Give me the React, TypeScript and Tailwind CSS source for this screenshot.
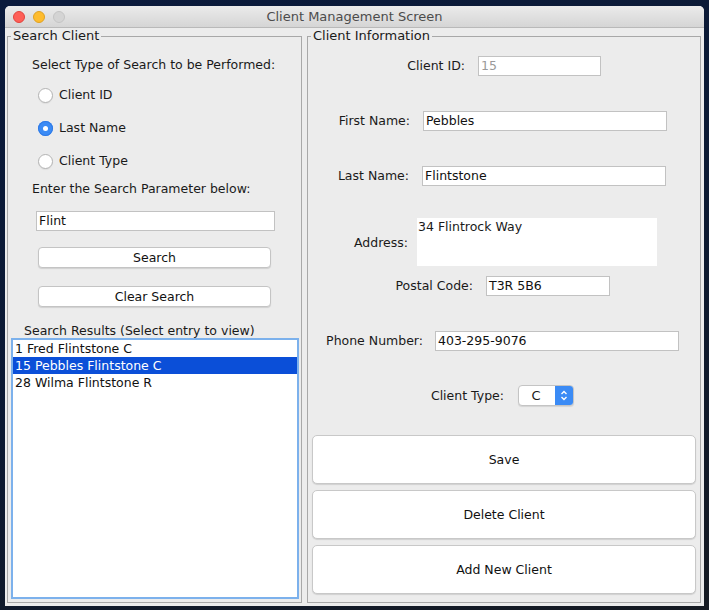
import React from "react";

const font = { fontFamily: '"DejaVu Sans", "Open Sans", sans-serif' };

function Radio({ label, checked }: { label: string; checked?: boolean }) {
  return (
    <div className="flex h-[16px] items-center">
      {checked ? (
        <span className="flex h-[15px] w-[15px] items-center justify-center rounded-full bg-[#3b8bf5] shadow-[inset_0_0_0_1px_#2f7ae6]">
          <span className="h-[5px] w-[5px] rounded-full bg-white" />
        </span>
      ) : (
        <span className="h-[15px] w-[15px] rounded-full border border-[#b3b3b3] bg-white shadow-[0_1px_1px_rgba(0,0,0,0.06)]" />
      )}
      <span className="ml-[6px]">{label}</span>
    </div>
  );
}

function Field({ value, width, muted }: { value: string; width: number; muted?: boolean }) {
  return (
    <div
      className={`flex h-[20px] items-center border border-[#c2c2c2] bg-white pl-[2px] ${muted ? "text-[#9a9a9a]" : "text-[#111]"}`}
      style={{ width }}
    >
      {value}
    </div>
  );
}

function SmallButton({ label }: { label: string }) {
  return (
    <button className="flex h-[21px] w-[233px] items-center justify-center rounded-[4px] border border-[#c4c4c4] bg-white text-[#111] shadow-[0_1px_1px_rgba(0,0,0,0.12)]">
      {label}
    </button>
  );
}

function BigButton({ label }: { label: string }) {
  return (
    <button className="flex h-[49px] w-[384px] items-center justify-center rounded-[5px] border border-[#c8c8c8] bg-white text-[#111] shadow-[0_1px_1px_rgba(0,0,0,0.12)]">
      {label}
    </button>
  );
}

function Row({ label, labelRight, children, top, height = 20 }: {
  label: string;
  labelRight: number;
  children: React.ReactNode;
  top: number;
  height?: number;
}) {
  return (
    <div className="flex items-center" style={{ marginTop: top, height }}>
      <div className="shrink-0 text-right" style={{ width: labelRight }}>
        {label}
      </div>
      {children}
    </div>
  );
}

export default function App() {
  const results = ["1 Fred Flintstone C", "15 Pebbles Flintstone C", "28 Wilma Flintstone R"];
  return (
    <div
      className="h-[610px] w-[709px] overflow-hidden bg-[linear-gradient(160deg,#0a1a3c_0%,#0c1a33_50%,#151a22_100%)] pl-[5px] pt-[6px] text-[12.5px] leading-[16px] text-[#1a1a1a]"
      style={font}
    >
      <div className="flex h-[600px] w-[699px] flex-col overflow-hidden rounded-t-[5px] bg-[#ececec]">
        {/* title bar */}
        <div className="relative flex h-[22px] shrink-0 items-center justify-center border-b border-[#b9b9b9] bg-[linear-gradient(#ebebeb,#d5d5d5)]">
          <div className="absolute left-[8px] top-[5px] flex gap-[8px]">
            <span className="h-[12px] w-[12px] rounded-full border border-[#e0443e] bg-[#fe5f57]" />
            <span className="h-[12px] w-[12px] rounded-full border border-[#dea123] bg-[#febc2e]" />
            <span className="h-[12px] w-[12px] rounded-full border border-[#c4c4c4] bg-[#d4d4d4]" />
          </div>
          <span className="text-[13px] text-[#4c4c4c]">Client Management Screen</span>
        </div>

        <div className="flex pl-[2px]">
          {/* left group */}
          <fieldset className="h-[575px] w-[295px] shrink-0 border border-[#a8a8a8] px-0 pb-0">
            <legend className="ml-[3px] px-[2px] text-[13px]">Search Client</legend>
            <div className="flex flex-col">
              <div className="mt-[13px] pl-[24px]">Select Type of Search to be Performed:</div>
              <div className="mt-[14px] flex flex-col gap-[17px] pl-[30px]">
                <Radio label="Client ID" />
                <Radio label="Last Name" checked />
                <Radio label="Client Type" />
              </div>
              <div className="mt-[12px] pl-[24px]">Enter the Search Parameter below:</div>
              <div className="mt-[14px] pl-[28px]">
                <Field value="Flint" width={239} />
              </div>
              <div className="mt-[16px] pl-[30px]">
                <SmallButton label="Search" />
              </div>
              <div className="mt-[18px] pl-[30px]">
                <SmallButton label="Clear Search" />
              </div>
              <div className="mt-[17px] h-[14px] pl-[16px] leading-[14px]">Search Results (Select entry to view)</div>
              <div className="ml-[3px] h-[261px] w-[288px] border-2 border-[#7cb1ec] bg-white pt-[0px]">
                {results.map((r, i) => (
                  <div
                    key={r}
                    className={`h-[17px] pl-[2px] leading-[17px] ${i === 1 ? "bg-[#0b4fd8] text-white" : "text-[#111]"}`}
                  >
                    {r}
                  </div>
                ))}
              </div>
            </div>
          </fieldset>

          {/* right group */}
          <fieldset className="ml-[5px] h-[575px] w-[394px] shrink-0 border border-[#a8a8a8] px-0 pb-0">
            <legend className="ml-[3px] px-[2px] text-[13px]">Client Information</legend>
            <div className="flex flex-col">
              <Row label="Client ID:" labelRight={157} top={12}>
                <div className="ml-[13px]">
                  <Field value="15" width={123} muted />
                </div>
              </Row>
              <Row label="First Name:" labelRight={102} top={35}>
                <div className="ml-[13px]">
                  <Field value="Pebbles" width={244} />
                </div>
              </Row>
              <Row label="Last Name:" labelRight={101} top={35}>
                <div className="ml-[13px]">
                  <Field value="Flintstone" width={244} />
                </div>
              </Row>
              <div className="mt-[32px] flex h-[48px]">
                <div className="w-[100px] shrink-0 self-center pt-[2px] text-right">Address:</div>
                <div className="ml-[9px] w-[240px] bg-white pl-[1px] pt-[1px]">34 Flintrock Way</div>
              </div>
              <Row label="Postal Code:" labelRight={165} top={10}>
                <div className="ml-[13px]">
                  <Field value="T3R 5B6" width={124} />
                </div>
              </Row>
              <Row label="Phone Number:" labelRight={115} top={35}>
                <div className="ml-[12px]">
                  <Field value="403-295-9076" width={244} />
                </div>
              </Row>
              <Row label="Client Type:" labelRight={196} top={34} height={21}>
                <div className="ml-[14px] flex h-[21px] w-[56px] overflow-hidden rounded-[4px] border border-[#c4c4c4] bg-white shadow-[0_1px_1px_rgba(0,0,0,0.1)]">
                  <span className="flex flex-1 items-center justify-center pr-[2px] text-[13px]">C</span>
                  <span className="flex w-[18px] items-center justify-center bg-[#3b8bf5]">
                    <svg width="8" height="13" viewBox="0 0 8 13" fill="none" stroke="white" strokeWidth="1.4">
                      <path d="M1.5 5 L4 2.5 L6.5 5" />
                      <path d="M1.5 8 L4 10.5 L6.5 8" />
                    </svg>
                  </span>
                </div>
              </Row>
              <div className="mt-[29px] flex flex-col gap-[6px] pl-[4px]">
                <BigButton label="Save" />
                <BigButton label="Delete Client" />
                <BigButton label="Add New Client" />
              </div>
            </div>
          </fieldset>
        </div>
      </div>
    </div>
  );
}
